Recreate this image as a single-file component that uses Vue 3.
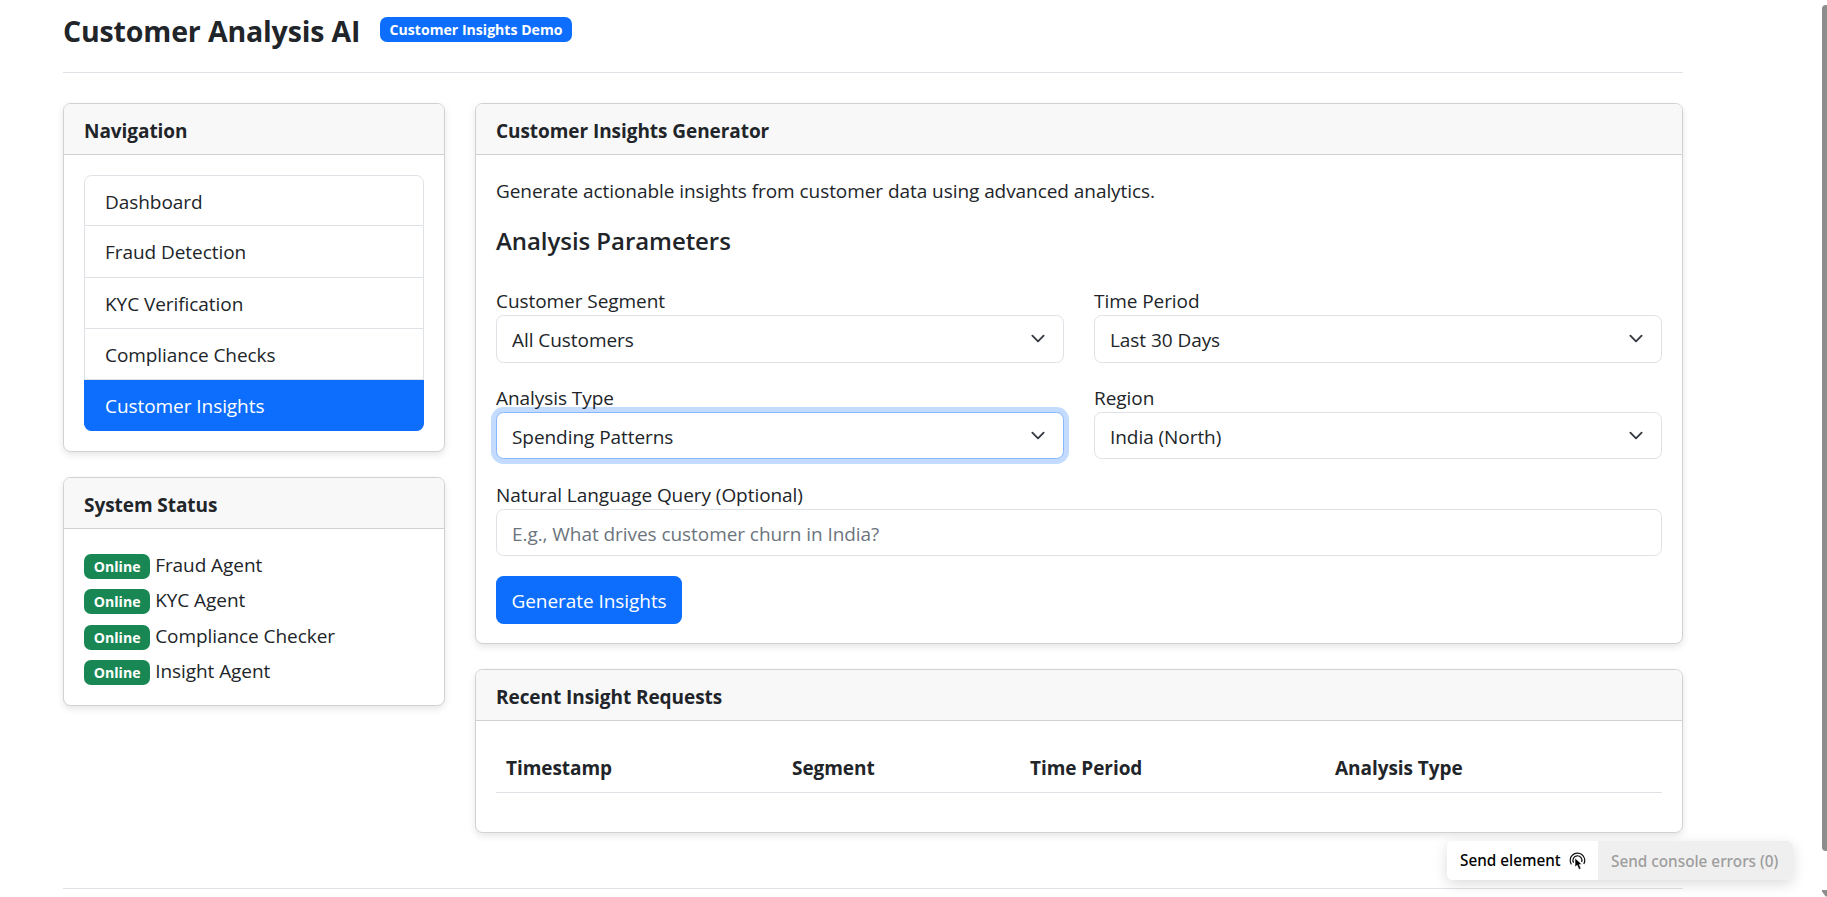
<script setup>
const nav = ['Dashboard', 'Fraud Detection', 'KYC Verification', 'Compliance Checks', 'Customer Insights']
const agents = ['Fraud Agent', 'KYC Agent', 'Compliance Checker', 'Insight Agent']
const selects = [
  { label: 'Customer Segment', value: 'All Customers' },
  { label: 'Time Period', value: 'Last 30 Days' },
  { label: 'Analysis Type', value: 'Spending Patterns', focus: true },
  { label: 'Region', value: 'India (North)' }
]
const cols = ['Timestamp', 'Segment', 'Time Period', 'Analysis Type']
</script>

<template>
  <div class="page">
    <header class="head">
      <h1>Customer Analysis AI</h1>
      <span class="badge blue">Customer Insights Demo</span>
    </header>
    <div class="layout">
      <aside class="side">
        <section class="card">
          <div class="card-head">Navigation</div>
          <div class="card-body">
            <ul class="list">
              <li v-for="n in nav" :key="n" :class="{ active: n === 'Customer Insights' }">{{ n }}</li>
            </ul>
          </div>
        </section>
        <section class="card">
          <div class="card-head">System Status</div>
          <div class="card-body status">
            <div v-for="a in agents" :key="a" class="agent">
              <span class="badge green">Online</span> {{ a }}
            </div>
          </div>
        </section>
      </aside>
      <main class="main">
        <section class="card">
          <div class="card-head">Customer Insights Generator</div>
          <div class="card-body form-body">
            <p class="lead">Generate actionable insights from customer data using advanced analytics.</p>
            <h2>Analysis Parameters</h2>
            <div class="form-grid">
              <label v-for="s in selects" :key="s.label" class="field">
                <span class="lab">{{ s.label }}</span>
                <select class="control select" :class="{ focus: s.focus }">
                  <option>{{ s.value }}</option>
                </select>
              </label>
            </div>
            <label class="field query">
              <span class="lab">Natural Language Query (Optional)</span>
              <input class="control" type="text" placeholder="E.g., What drives customer churn in India?" />
            </label>
            <button class="btn" type="button">Generate Insights</button>
          </div>
        </section>
        <section class="card">
          <div class="card-head">Recent Insight Requests</div>
          <div class="card-body table-body">
            <table>
              <thead>
                <tr><th v-for="c in cols" :key="c">{{ c }}</th></tr>
              </thead>
            </table>
          </div>
        </section>
      </main>
    </div>
    <hr class="foot" />
    <div class="widget">
      <div class="send">
        <span>Send element</span>
        <svg width="17" height="18" viewBox="0 0 17 18" fill="none" stroke="#111" stroke-width="1.2">
          <path d="M2.4 12.4A7.3 7.3 0 1 1 14.8 12" />
          <path d="M4.6 10.6A4.5 4.5 0 1 1 12.6 10" />
          <path d="M6 6V15L8.2 13.2L10 17.4L12 16.5L10.2 12.6H13Z" fill="#000" stroke="#fff" stroke-width=".6" />
        </svg>
      </div>
      <div class="errors">Send console errors (0)</div>
    </div>
    <div class="scroll">
      <i class="thumb"></i>
      <i class="arrow"></i>
    </div>
  </div>
</template>

<style>
html, body { margin: 0; height: 100%; overflow: hidden; background: #fff; }
</style>

<style scoped>
.page {
  box-sizing: border-box;
  height: 897px;
  overflow: hidden;
  padding: 0 144px 0 63px;
  font-family: "Open Sans", "Noto Sans", sans-serif;
  font-size: 19px;
  letter-spacing: -0.06px;
  line-height: 30px;
  color: #212529;
}
.head {
  display: flex;
  align-items: center;
  height: 73px;
  padding-bottom: 13px;
  box-sizing: border-box;
  border-bottom: 1px solid #dee2e6;
  gap: 19.5px;
}
h1 { margin: 0; padding-top: 2px; font-size: 28.5px; font-weight: 700; line-height: 36px; letter-spacing: -0.15px; }
.badge {
  display: inline-block;
  border-radius: 7px;
  color: #fff;
  font-size: 14.1px;
  font-weight: 700;
  line-height: 15px;
  padding: 5px 9.8px;
  letter-spacing: 0;
}
.blue { background: #0d6efd; }
.green { background: #198754; }
.layout {
  display: grid;
  grid-template-columns: 382px 1fr;
  gap: 30px;
  margin-top: 30px;
}
.side { display: flex; flex-direction: column; gap: 24.3px; }
.main { display: flex; flex-direction: column; gap: 25.5px; }
.card {
  border: 1.25px solid #d1d1d2;
  border-radius: 7.5px;
  background: #fff;
  box-shadow: 0 3px 7px rgba(0, 0, 0, .1);
  overflow: hidden;
}
.card-head {
  height: 51px;
  box-sizing: border-box;
  padding: 12px 20px 8px;
  background: #f8f8f8;
  border-bottom: 1.25px solid #d1d1d2;
  font-weight: 700;
}
.card-body { padding: 20px; }
.form-body { padding-bottom: 19px; }
.list { list-style: none; margin: 0; padding: 0; }
.list li {
  height: 51.3px;
  box-sizing: border-box;
  padding: 11px 20px 9px;
  border: 1.25px solid #dee2e6;
  border-top-width: 0;
}
.list li:first-child { border-top-width: 1.25px; border-radius: 7.5px 7.5px 0 0; }
.list li:last-child { border-radius: 0 0 7.5px 7.5px; }
.list li.active { background: #0d6efd; border-color: #0d6efd; color: #fff; }
.status { padding-top: 21px; padding-bottom: 13.5px; }
.agent { height: 35.5px; line-height: 30px; }
.lead { margin: 0 0 21px; padding-top: 1px; height: 28px; }
h2 { margin: 0 0 30px; font-size: 24px; font-weight: 600; line-height: 30px; padding-top: 1px; height: 29px; }
.form-grid {
  display: grid;
  grid-template-columns: 1fr 1fr;
  gap: 19px 30px;
}
.field { display: flex; flex-direction: column; }
.lab { height: 30px; position: relative; top: 1px; }
.control {
  box-sizing: border-box;
  width: 100%;
  height: 47.5px;
  padding: 9px 15px 6px;
  border: 1.25px solid #dee2e6;
  border-radius: 7.5px;
  background: #fff;
  font: inherit;
  letter-spacing: inherit;
  color: #212529;
  outline: none;
}
.control::placeholder { color: #6c757d; opacity: 1; }
.select {
  appearance: none;
  padding-right: 45px;
  background: #fff url("data:image/svg+xml,%3csvg xmlns='http://www.w3.org/2000/svg' viewBox='0 0 16 16'%3e%3cpath fill='none' stroke='%23343a40' stroke-linecap='round' stroke-linejoin='round' stroke-width='2' d='m2 5 6 6 6-6'/%3e%3c/svg%3e") no-repeat right 15px center / 20px 15px;
}
.focus { border-color: #86b7fe; box-shadow: 0 0 0 5px rgba(13, 110, 253, .25); }
.query { margin-top: 19.5px; }
.btn {
  display: block;
  margin-top: 20px;
  height: 47.5px;
  padding: 9px 15.5px 6px;
  border: 0;
  border-radius: 7.5px;
  background: #0d6efd;
  color: #fff;
  font: inherit;
  letter-spacing: inherit;
}
.table-body { padding-bottom: 39px; }
table { width: 100%; border-collapse: collapse; table-layout: fixed; }
th {
  text-align: left;
  font-weight: 700;
  padding: 12px 10px 8px;
  height: 51px;
  box-sizing: border-box;
  border-bottom: 1.25px solid #dee2e6;
}
th:nth-child(1) { width: 286px; }
th:nth-child(2) { width: 238px; }
th:nth-child(3) { width: 305px; }
.foot {
  margin: 55px 0 0;
  border: 0;
  border-top: 1px solid #dee2e6;
}
.widget {
  position: fixed;
  left: 1447px;
  top: 841px;
  display: flex;
  width: 346px;
  height: 39px;
  border-radius: 6px;
  overflow: hidden;
  box-shadow: 0 4px 14px rgba(0, 0, 0, .14);
  font-family: "Noto Sans", sans-serif;
  font-size: 15.3px;
  font-weight: 500;
  letter-spacing: 0;
  line-height: 41px;
}
.send {
  width: 151px;
  background: #fff;
  color: #000;
  display: flex;
  align-items: center;
  gap: 8px;
  padding-left: 13px;
  box-sizing: border-box;
}
.send svg { margin-top: 1px; flex: none; }
.errors { flex: 1; background: #efefef; color: #9d9d9d; padding-left: 13px; }
.scroll { position: fixed; right: 0; top: 0; bottom: 0; width: 5px; overflow: hidden; }
.thumb { display: block; position: absolute; top: 5px; right: 0; width: 5px; height: 846px; background: #8d8d8d; border-radius: 4px 0 0 4px; }
.arrow { display: block; position: absolute; bottom: 0; left: -1px; border: 5px solid transparent; border-top: 7px solid #8d8d8d; border-bottom: 0; }
</style>
